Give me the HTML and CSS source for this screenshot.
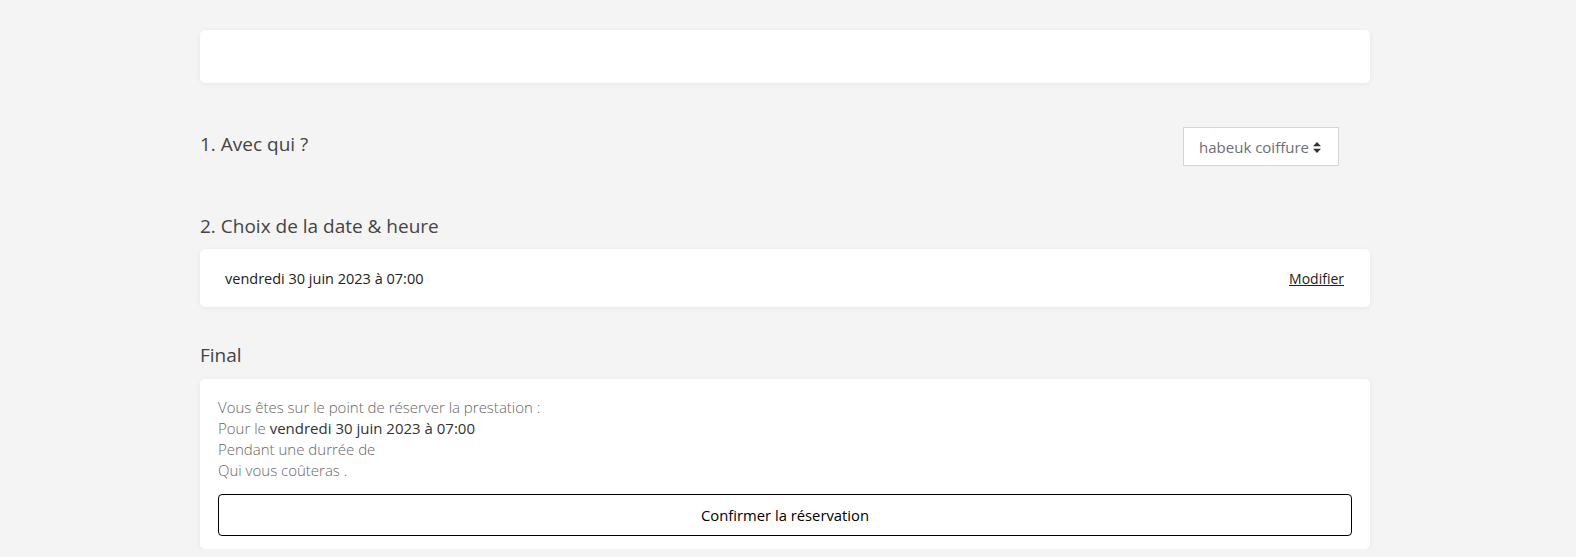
FILE: index.html
```html
<!DOCTYPE html>
<html lang="fr">

<head>
  <meta charset="UTF-8" />
  <meta name="viewport" content="width=device-width, initial-scale=1.0" />
  <title>Réservation</title>
  <link rel="stylesheet" href="styles.css">
</head>

<body>
  <div class="container">
    <div class="card card-top"></div>

    <!-- etape 1 -->
    <div class="step step-who">
      <h3 class="step-title">1. Avec qui ?</h3>
      <div class="select-box">
        <span>habeuk coiffure</span>
        <svg class="sort-icon" width="8" height="11" viewBox="0 0 8 11">
          <path d="M4 0 L8 4.3 H0 Z" fill="#333" />
          <path d="M4 11 L8 6.7 H0 Z" fill="#333" />
        </svg>
      </div>
    </div>

    <!-- etape 2 -->
    <div class="step step-date">
      <h3 class="step-title">2. Choix de la date &amp; heure</h3>
      <div class="card card-date">
        <span>vendredi 30 juin 2023 à 07:00</span>
        <a href="#" class="link-edit">Modifier</a>
      </div>
    </div>

    <!-- final -->
    <div class="step step-final">
      <h3 class="step-title">Final</h3>
      <div class="card card-final">
        <p>Vous êtes sur le point de réserver la prestation :</p>
        <p>Pour le <strong>vendredi 30 juin 2023 à 07:00</strong></p>
        <p>Pendant une durrée de</p>
        <p>Qui vous coûteras .</p>
        <button class="btn-confirm">Confirmer la réservation</button>
      </div>
    </div>
  </div>
</body>

</html>
```

FILE: styles.css
```css
body {
  margin: 0;
  background-color: #f4f4f4;
  font-family: "Open Sans", "Liberation Sans", sans-serif;
  color: #333;
}

.container {
  width: 1170px;
  margin: 0 auto;
  padding: 30px 6px 0 0;
}

.card {
  background-color: #fff;
  border-radius: 5px;
  box-shadow: 0 1px 5px rgba(0, 0, 0, 0.06);
}

.card-top {
  height: 53px;
}

.step-title {
  margin: 0;
  font-size: 19px;
  font-weight: 500;
  line-height: 24px;
  color: #444;
}

.step-who {
  display: flex;
  justify-content: space-between;
  align-items: flex-start;
  padding-right: 31px;
  margin-top: 44px;
  height: 39px;
}

.step-who .step-title {
  margin-top: 5px;
}

.select-box {
  display: flex;
  align-items: center;
  gap: 4px;
  height: 37px;
  padding: 0 17px 0 15px;
  background-color: #fff;
  border: 1px solid #d3d5d9;
  font-size: 15px;
  color: #6c6f75;
}

.sort-icon {
  margin-top: 1px;
}

.step-date {
  margin-top: 48px;
}

.card-date {
  display: flex;
  justify-content: space-between;
  align-items: center;
  height: 58px;
  margin-top: 11px;
  padding: 0 26px 0 25px;
  font-size: 14.5px;
  color: #222;
}

.link-edit {
  color: #222;
  font-size: 14px;
  text-decoration: underline;
}

.step-final {
  margin-top: 36px;
}

.card-final {
  margin-top: 12px;
  padding: 18px 18px 13px;
  font-size: 15px;
  font-weight: 300;
  color: #666;
}

.card-final p {
  margin: 0;
  line-height: 21px;
}

.card-final strong {
  font-weight: 500;
  color: #333;
}

.btn-confirm {
  display: block;
  width: 100%;
  height: 42px;
  margin-top: 13px;
  background-color: #fff;
  border: 1px solid #000;
  border-radius: 4px;
  font-family: inherit;
  font-size: 14.8px;
  font-weight: 500;
  color: #000;
}
```
